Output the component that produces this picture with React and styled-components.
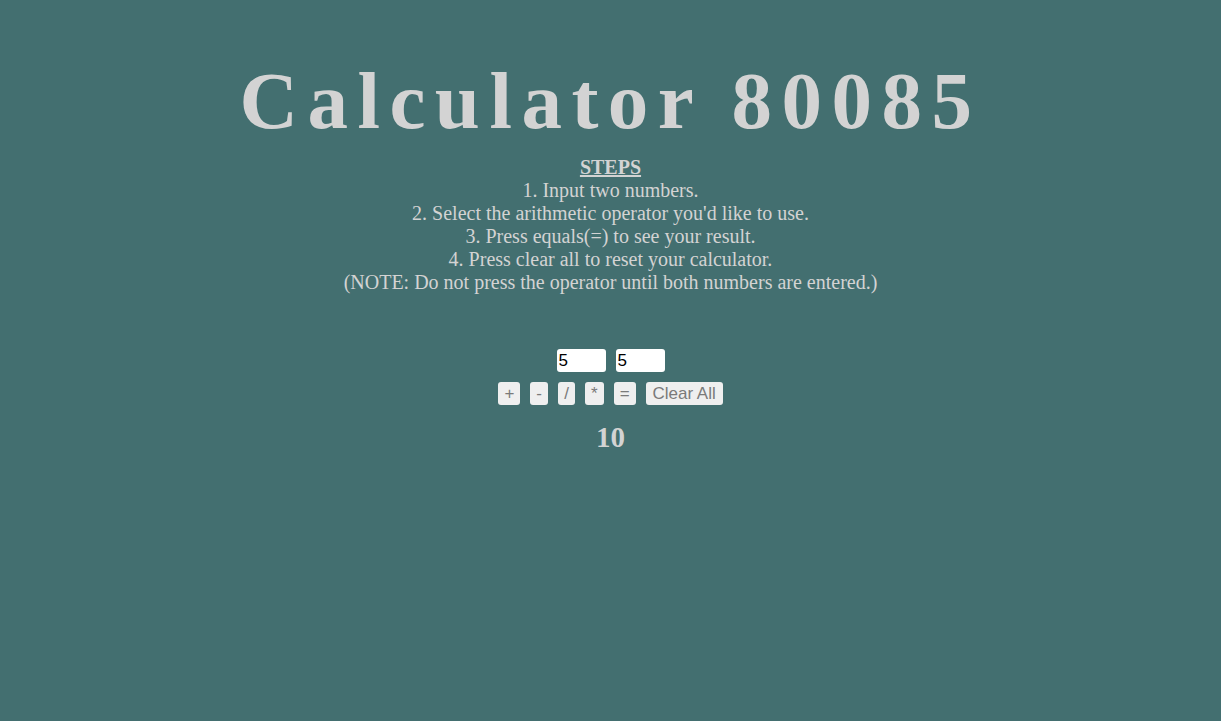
import React, { useState } from "react";
import styled, { createGlobalStyle } from "styled-components";

const GlobalStyle = createGlobalStyle`
  html, body {
    margin: 0;
    padding: 0;
    background-color: #436f70;
    min-height: 100%;
  }
  body {
    font-family: "Liberation Serif", "Times New Roman", serif;
  }
`;

const Page = styled.div`
  min-height: 721px;
  background-color: #436f70;
  color: #d3d3d3;
  display: flex;
  flex-direction: column;
  align-items: center;
  padding-top: 55px;
  box-sizing: border-box;
`;

const Title = styled.h1`
  margin: 0;
  font-family: "Liberation Serif", "Times New Roman", serif;
  font-size: 81px;
  font-weight: bold;
  letter-spacing: 9.5px;
  line-height: 92px;
  color: #d3d3d3;
`;

const Steps = styled.div`
  margin-top: 9px;
  text-align: center;
  font-size: 20px;
  line-height: 23px;
  color: #d3d3d3;

  h4 {
    margin: 0;
    font-size: 20px;
    font-weight: bold;
    text-decoration: underline;
  }
`;

const InputRow = styled.div`
  display: flex;
  gap: 10px;
  margin-top: 55px;
`;

const NumInput = styled.input`
  width: 49px;
  height: 23px;
  box-sizing: border-box;
  border: none;
  border-radius: 3px;
  padding: 0 2px;
  font-family: "Liberation Sans", Arial, sans-serif;
  font-size: 17px;
  color: #000;
  background: #fff;
  outline: none;
`;

const ButtonRow = styled.div`
  display: flex;
  gap: 10px;
  margin-top: 10px;
`;

const OpButton = styled.button`
  height: 23px;
  min-width: ${props => (props.wide ? "77px" : "17px")};
  padding: 0 6px;
  border: none;
  border-radius: 3px;
  background: #efefef;
  color: #7a7a7a;
  font-family: "Liberation Sans", Arial, sans-serif;
  font-size: 17px;
  line-height: 23px;
  cursor: pointer;
`;

const Result = styled.div`
  margin-top: 16px;
  font-size: 29px;
  font-weight: bold;
  color: #d3d3d3;
`;

const App = () => {
  const [a, setA] = useState("5");
  const [b, setB] = useState("5");
  const [result, setResult] = useState("10");
  const [op, setOp] = useState("+");

  const calc = (o) => {
    const x = parseFloat(a);
    const y = parseFloat(b);
    if (o === "+") return x + y;
    if (o === "-") return x - y;
    if (o === "/") return x / y;
    return x * y;
  };

  const clearAll = () => {
    setA("");
    setB("");
    setResult("");
  };

  return (
    <Page>
      <GlobalStyle />
      <Title>Calculator 80085</Title>
      <Steps>
        <h4>STEPS</h4>
        <div>1. Input two numbers.</div>
        <div>2. Select the arithmetic operator you'd like to use.</div>
        <div>3. Press equals(=) to see your result.</div>
        <div>4. Press clear all to reset your calculator.</div>
        <div>(NOTE: Do not press the operator until both numbers are entered.)</div>
      </Steps>
      <InputRow>
        <NumInput value={a} onChange={(e) => setA(e.target.value)} />
        <NumInput value={b} onChange={(e) => setB(e.target.value)} />
      </InputRow>
      <ButtonRow>
        {["+", "-", "/", "*"].map((o) => (
          <OpButton key={o} onClick={() => setOp(o)}>{o}</OpButton>
        ))}
        <OpButton onClick={() => setResult(String(calc(op)))}>=</OpButton>
        <OpButton wide onClick={clearAll}>Clear All</OpButton>
      </ButtonRow>
      <Result>{result}</Result>
    </Page>
  );
};

export default App;
